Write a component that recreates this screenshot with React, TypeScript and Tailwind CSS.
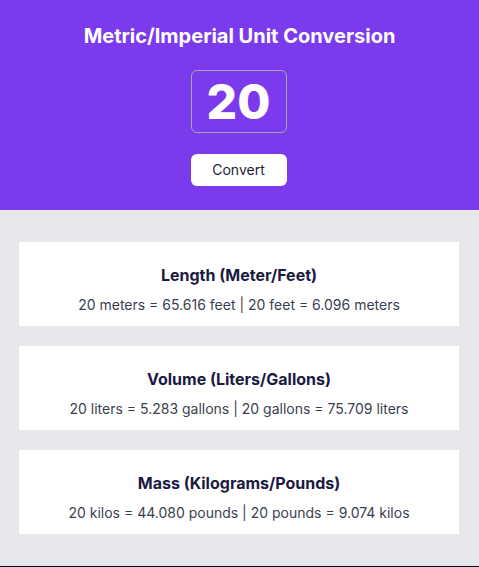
import * as React from "react";

const results = [
  {
    title: "Length (Meter/Feet)",
    text: "20 meters = 65.616 feet | 20 feet = 6.096 meters",
  },
  {
    title: "Volume (Liters/Gallons)",
    text: "20 liters = 5.283 gallons | 20 gallons = 75.709 liters",
  },
  {
    title: "Mass (Kilograms/Pounds)",
    text: "20 kilos = 44.080 pounds | 20 pounds = 9.074 kilos",
  },
];

export default function App() {
  const [value, setValue] = React.useState("20");

  return (
    <div className="h-screen bg-[#0b0b1f] font-['Inter',sans-serif]">
      {/* Header */}
      <header className="bg-[#7c3aed] flex flex-col items-center pt-[22px] h-[210px]">
        <h1 className="text-white text-xl font-bold leading-7">
          Metric/Imperial Unit Conversion
        </h1>
        <input
          value={value}
          onChange={(e) => setValue(e.target.value)}
          className="mt-5 ml-[-2px] w-[96px] h-[63px] bg-transparent border border-[#a7a3b8] rounded-md text-white text-5xl font-extrabold text-center outline-none"
        />
        <button className="mt-[21px] ml-[-2px] w-[96px] h-[32px] bg-white rounded-md text-[#1f1b3a] text-sm">
          Convert
        </button>
      </header>

      {/* Results */}
      <main className="bg-[#e5e7eb] pl-[19px] pr-5 py-8 flex flex-col gap-5">
        {results.map((r) => (
          <section
            key={r.title}
            className="bg-white h-[84px] flex flex-col items-center pt-[21px]"
          >
            <h2 className="text-[#1b1a3f] text-base font-bold leading-6">
              {r.title}
            </h2>
            <p className="mt-[8px] text-[#3a3f50] text-sm leading-5">
              {r.text}
            </p>
          </section>
        ))}
      </main>
    </div>
  );
}
